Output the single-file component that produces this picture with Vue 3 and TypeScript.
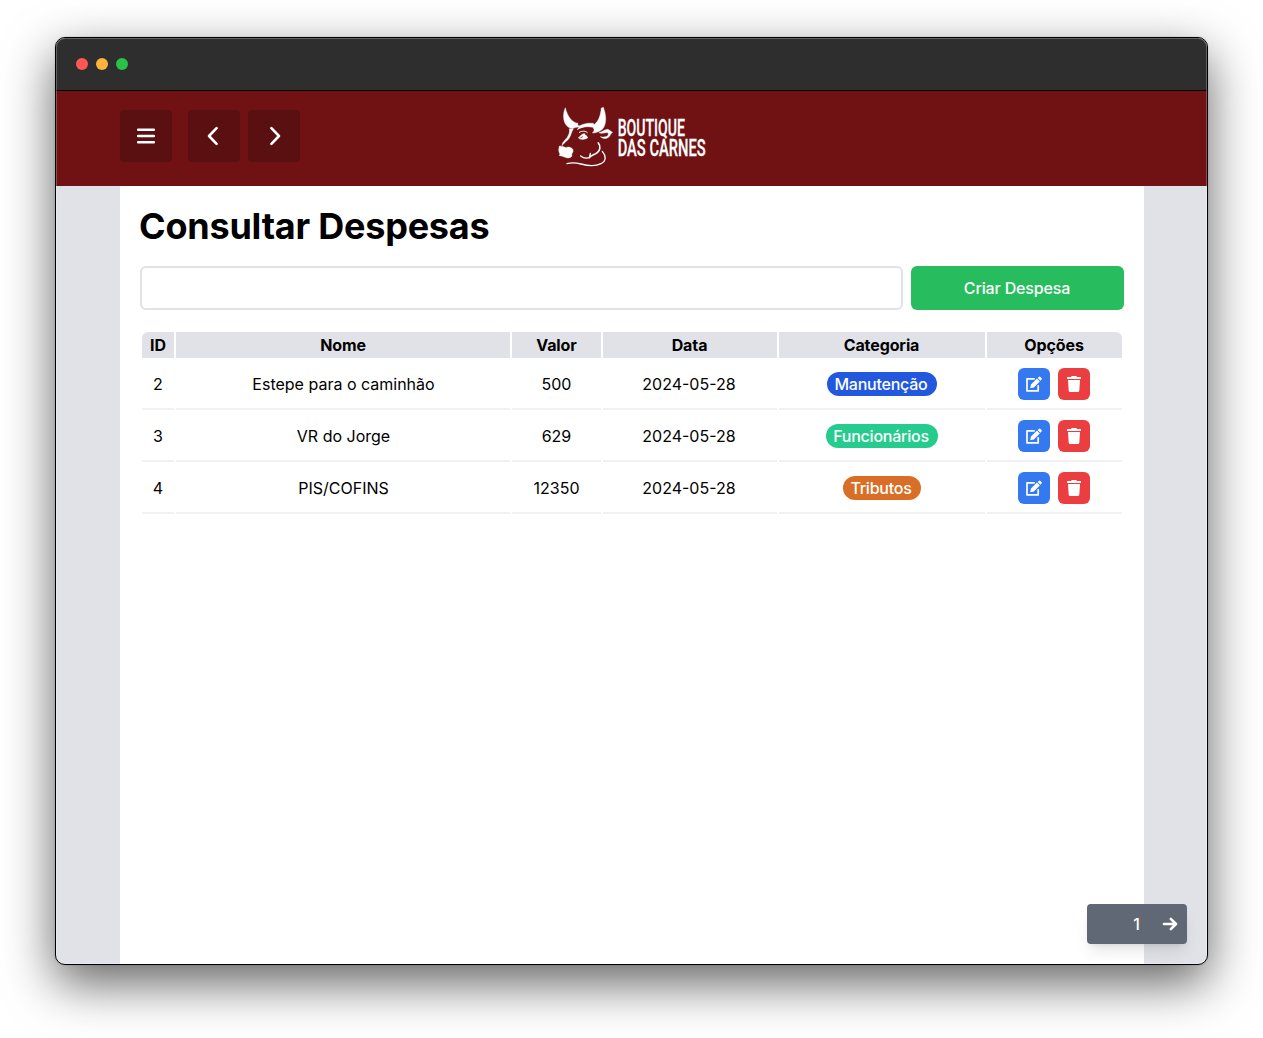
<script setup lang="ts">
interface Expense {
  id: number
  name: string
  value: number
  date: string
  category: string
  color: string
}

const columns: string[] = ['ID', 'Nome', 'Valor', 'Data', 'Categoria', 'Opções']

const expenses: Expense[] = [
  { id: 2, name: 'Estepe para o caminhão', value: 500, date: '2024-05-28', category: 'Manutenção', color: '#2158dd' },
  { id: 3, name: 'VR do Jorge', value: 629, date: '2024-05-28', category: 'Funcionários', color: '#25cc8e' },
  { id: 4, name: 'PIS/COFINS', value: 12350, date: '2024-05-28', category: 'Tributos', color: '#d96f26' },
]
</script>

<template>
  <div class="desktop">
    <div class="window">
      <div class="titlebar">
        <span class="dot red"></span>
        <span class="dot yellow"></span>
        <span class="dot green"></span>
      </div>

      <header class="header">
        <nav class="nav">
          <button class="nav-btn menu" aria-label="Menu">
            <svg width="20" height="20" viewBox="0 0 20 20"><path d="M2.2 3.7H17.8M2.2 10H17.8M2.2 16.3H17.8" /></svg>
          </button>
          <button class="nav-btn" aria-label="Voltar">
            <svg width="20" height="20" viewBox="0 0 20 20"><path d="M12.6 2.2L5 10L12.6 17.8" /></svg>
          </button>
          <button class="nav-btn" aria-label="Avançar">
            <svg width="20" height="20" viewBox="0 0 20 20"><path d="M7.4 2.2L15 10L7.4 17.8" /></svg>
          </button>
        </nav>
        <svg class="logo" width="164" height="74" viewBox="0 0 492 222">
          <g fill="#fff" stroke="#fff" stroke-width="1.2" stroke-linejoin="round">
            <path d="M46 23C38 40 38 66 52 79C56 84 62 84 68 86C76 80 92 83 106 76C96 78 86 78 83 76L84 70C68 68 53 52 46 23Z" />
            <path d="M160 22C169 45 171 73 157 88C148 96 137 99 127 99C133 94 134 89 129 82L113 80C102 81 91 83 82 89C88 74 104 68 130 70L132 74C146 64 151 48 154 24Z" />
            <path d="M147 98C158 95 164 88 173 88C180 90 182 95 188 97C181 100 181 112 170 115C164 117 158 115 151 110C163 112 170 111 174 106C177 100 174 97 169 98C162 98 157 102 147 98Z" />
            <path d="M58 86C60 98 56 105 51 113C45 121 36 126 36 137C45 125 55 121 60 110C65 101 64 95 70 87Z" />
            <path d="M84 114C92 109 94 100 105 101L105 105C110 105 112 110 113 114C106 118 96 120 87 116L97 113L100 107C96 108 93 114 84 114Z" />
            <path d="M28 138C36 138 42 141 48 143C55 139 65 142 69 149C71 156 66 159 65 164C68 169 62 173 54 174C44 173 37 167 28 167C31 161 28 159 27 155C25 150 27 145 28 138Z" />
          </g>
          <g fill="none" stroke="#fff" stroke-linecap="round">
            <path stroke-width="5" d="M145 129C153 139 150 152 142 158C133 165 123 165 118 173" />
            <path stroke-width="4" d="M118 173C110 175 98 173 92 168M118 173C120 167 120 164 121 160" />
            <path stroke-width="3" d="M88 97C96 92 107 92 112 98" />
            <path stroke-width="4" d="M157 154C169 168 169 183 153 191C132 202 111 197 93 192C77 188 64 187 51 191" />
          </g>
          <g class="logo-text">
            <text x="203" y="106.5" textLength="202" lengthAdjust="spacingAndGlyphs">BOUTIQUE</text>
            <text x="203" y="166.5" textLength="264" lengthAdjust="spacingAndGlyphs">DAS CARNES</text>
          </g>
        </svg>
      </header>

      <div class="body">
        <main class="page">
          <h1>Consultar Despesas</h1>
          <div class="toolbar">
            <input class="search" type="text" aria-label="Pesquisar" />
            <button class="create">Criar Despesa</button>
          </div>
          <table>
            <colgroup>
              <col class="c-id" /><col class="c-name" /><col class="c-value" />
              <col class="c-date" /><col class="c-cat" /><col class="c-opt" />
            </colgroup>
            <thead>
              <tr><th v-for="c in columns" :key="c">{{ c }}</th></tr>
            </thead>
            <tbody>
              <tr v-for="e in expenses" :key="e.id">
                <td>{{ e.id }}</td>
                <td>{{ e.name }}</td>
                <td>{{ e.value }}</td>
                <td>{{ e.date }}</td>
                <td><span class="tag" :style="{ background: e.color }">{{ e.category }}</span></td>
                <td>
                  <div class="actions">
                    <button class="action edit" aria-label="Editar">
                      <svg width="16" height="16" viewBox="0 0 16 16">
                        <path d="M8.7 2.8H1V14.9H12.2V9.2" fill="none" stroke="#fff" stroke-width="1.7" stroke-linejoin="round" />
                        <path d="M11 2.6L13.8 5.4L7.8 11.4L4.2 12.2L5 8.6Z" fill="#fff" />
                        <path d="M11.7 2L12.8 .9Q13.6 .2 14.4 .9L15.5 2Q16.2 2.7 15.5 3.5L14.4 4.7Z" fill="#fff" />
                      </svg>
                    </button>
                    <button class="action delete" aria-label="Excluir">
                      <svg width="16" height="16" viewBox="0 0 16 16">
                        <path d="M5.6 0H10.4L10.9 1H14.5Q15 1 15 1.5V2.5Q15 3 14.5 3H1.5Q1 3 1 2.5V1.5Q1 1 1.5 1H5.1ZM2 4H14L13.3 14.7Q13.2 16 11.9 16H4.1Q2.8 16 2.7 14.7Z" fill="#fff" />
                      </svg>
                    </button>
                  </div>
                </td>
              </tr>
            </tbody>
          </table>
        </main>
      </div>

      <div class="pager">
        <span>1</span>
        <svg width="16" height="16" viewBox="0 0 16 16"><path d="M2 8H14M8.8 2.8L14 8L8.8 13.2" /></svg>
      </div>
    </div>
  </div>
</template>

<style>
body {
  margin: 0;
  background: #fff;
}
</style>

<style scoped>
* {
  box-sizing: border-box;
}
.desktop {
  width: 1263px;
  height: 1038px;
  padding: 37px 55px;
  overflow: hidden;
  font: 16px/24px Inter, sans-serif;
  color: #000;
}
button {
  border: 0;
  padding: 0;
  font: inherit;
  color: #fff;
}
.window {
  position: relative;
  display: flex;
  flex-direction: column;
  width: 1153px;
  height: 928px;
  border: 1px solid #000;
  border-radius: 10px;
  overflow: hidden;
  background: #e1e2e8;
  box-shadow: 0 18px 50px rgba(0, 0, 0, 0.62), 0 0 2px rgba(0, 0, 0, 0.2);
}
.window::after {
  content: '';
  position: absolute;
  inset: 0;
  border: 1px solid rgba(255, 255, 255, 0.25);
  border-radius: 9px;
  pointer-events: none;
}
.titlebar {
  display: flex;
  flex: none;
  align-items: center;
  gap: 8px;
  height: 53px;
  padding-left: 20px;
  background: #2e2e2e;
  border-bottom: 1px solid #000;
}
.dot {
  width: 12px;
  height: 12px;
  border-radius: 50%;
}
.red { background: #ff5753; }
.yellow { background: #fdb33c; }
.green { background: #28c245; }
.header {
  display: flex;
  flex: none;
  align-items: flex-start;
  height: 95px;
  padding: 9px 64px 0;
  background: #701214;
}
.nav {
  display: flex;
  gap: 8px;
  width: 430px;
  padding-top: 10px;
}
.nav-btn {
  display: grid;
  place-items: center;
  width: 52px;
  height: 52px;
  border-radius: 4px;
  background: #5a0f11;
}
.nav-btn.menu {
  margin-right: 8px;
}
.nav-btn svg,
.pager svg {
  fill: none;
  stroke: #fff;
  stroke-width: 2.6;
  stroke-linecap: round;
  stroke-linejoin: round;
}
.logo {
  overflow: visible;
}
.logo-text {
  fill: #fff;
  stroke: #fff;
  stroke-width: 0.8px;
  font-family: Roboto, sans-serif;
  font-size: 72px;
  font-weight: 500;
}
.body {
  display: flex;
  flex: 1;
  padding: 0 63px 0 64px;
}
.page {
  width: 1024px;
  padding: 20px;
  background: #fff;
}
h1 {
  margin: 0 0 20px -1px;
  font-size: 36px;
  line-height: 40px;
  font-weight: 700;
  letter-spacing: -0.22px;
}
.toolbar {
  display: flex;
  gap: 8px;
  margin-bottom: 20px;
}
.search {
  flex: 1;
  height: 44px;
  border: 2px solid #e1e2e8;
  border-radius: 6px;
  background: #fff;
}
.create {
  width: 213px;
  height: 44px;
  padding-right: 1px;
  border-radius: 6px;
  background: #27bd5e;
  font-weight: 500;
  letter-spacing: -0.15px;
}
table {
  width: 984px;
  table-layout: fixed;
  border-collapse: separate;
  border-spacing: 2px;
  text-align: center;
}
.c-id { width: 32px; }
.c-name { width: 334px; }
.c-value { width: 89px; }
.c-date { width: 174px; }
.c-cat { width: 206px; }
.c-opt { width: 135px; }
th {
  height: 26px;
  padding: 1px;
  background: #e1e2e8;
  font-weight: 750;
  letter-spacing: -0.1px;
}
th:first-child { border-top-left-radius: 6px; }
th:last-child { border-top-right-radius: 6px; }
td {
  height: 50px;
  padding: 8px 0;
  border-bottom: 2px solid #f1f1f2;
}
td:nth-child(2) {
  padding-left: 1px;
}
td:nth-child(4),
th:nth-child(n + 4) {
  padding-right: 2px;
}
.tag {
  display: inline-block;
  padding: 0 9px 0 7px;
  border-radius: 12px;
  color: #fff;
  font-weight: 500;
  letter-spacing: -0.23px;
}
.actions {
  display: flex;
  justify-content: center;
  gap: 8px;
  padding-right: 2px;
}
.action {
  display: grid;
  place-items: center;
  width: 32px;
  height: 32px;
  border-radius: 6px;
}
.edit { background: #3479ef; }
.delete { background: #eb3e40; }
.pager {
  position: absolute;
  right: 20px;
  bottom: 20px;
  display: flex;
  align-items: center;
  justify-content: flex-end;
  gap: 21px;
  width: 100px;
  height: 40px;
  padding-right: 9px;
  border-radius: 4px;
  background: #606775;
  color: #fff;
  font-weight: 500;
  box-shadow: 0 10px 15px -3px rgba(0, 0, 0, 0.1), 0 4px 6px -4px rgba(0, 0, 0, 0.1);
}
.pager span {
  padding-right: 1px;
}
</style>
